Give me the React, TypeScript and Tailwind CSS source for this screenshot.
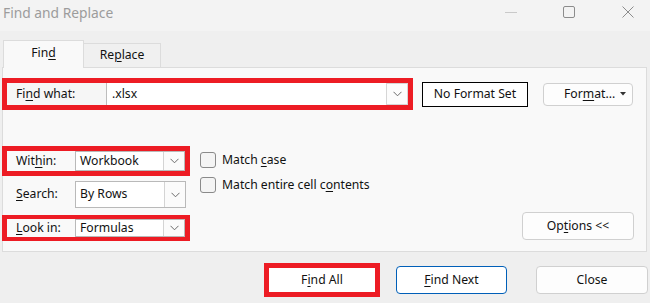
import React from "react";

const U = ({ children }: { children: React.ReactNode }) => (
  <span className="underline underline-offset-[2px] decoration-[1px]">{children}</span>
);

const Chevron = () => (
  <svg width="9" height="6" viewBox="0 0 9 6" className="block">
    <path d="M0.5 0.8 L4.5 4.8 L8.5 0.8" fill="none" stroke="#6b6b6b" strokeWidth="1" />
  </svg>
);

const Select = ({ value, className = "" }: { value: string; className?: string }) => (
  <div className={`flex bg-white border border-[#b9b9b9] ${className}`}>
    <div className="flex-1 flex items-center pl-[4px] leading-none">{value}</div>
    <div className="w-[21px] border-l border-[#d4d4d4] bg-[#fbfbfb] flex items-center justify-center">
      <Chevron />
    </div>
  </div>
);

const Checkbox = ({ children }: { children: React.ReactNode }) => (
  <div className="flex items-center gap-[6px] h-[16px]">
    <div className="w-[16px] h-[16px] rounded-[3px] border border-[#8a8a8a] bg-[#f4f4f4]" />
    <span className="leading-none">{children}</span>
  </div>
);

export default function App() {
  return (
    <div className="w-[650px] h-[303px] bg-[#efefef] overflow-hidden flex flex-col text-[12.2px] text-[#111] font-['Noto_Sans',sans-serif]">
      {/* Title bar */}
      <div className="h-[31px] shrink-0 bg-[#f3f3f3] flex items-start">
        <div className="pl-[3px] pt-[2px] text-[13.8px] text-[#9c9c9c] leading-[22px]">Find and Replace</div>
        <div className="ml-auto flex items-start pt-[6px] pr-[16px]">
          <svg width="12" height="12" viewBox="0 0 12 12" className="block">
            <path d="M0 6.5 H12" stroke="#c9c9c9" strokeWidth="1" />
          </svg>
          <svg width="12" height="12" viewBox="0 0 12 12" className="block ml-[46px]">
            <rect x="0.5" y="0.5" width="11" height="11" rx="1.5" fill="none" stroke="#8c8c8c" strokeWidth="1" />
          </svg>
          <svg width="12" height="12" viewBox="0 0 12 12" className="block ml-[47px]">
            <path d="M0.5 0.5 L11.5 11.5 M11.5 0.5 L0.5 11.5" stroke="#8c8c8c" strokeWidth="1" />
          </svg>
        </div>
      </div>

      {/* Tabs */}
      <div className="h-[36px] shrink-0 flex items-end pl-[3px]">
        <div className="relative z-10 w-[81px] h-[28px] -mb-px bg-[#f9f9f9] border border-b-0 border-[#dcdcdc] flex items-center justify-center pb-[2px]">
          Fin<U>d</U>
        </div>
        <div className="w-[77px] h-[24px] bg-[#f0f0f0] border border-b-0 border-l-0 border-[#dcdcdc] flex items-center justify-center pb-[1px]">
          Re<U>p</U>lace
        </div>
      </div>

      {/* Panel */}
      <div className="ml-[2px] w-[645px] h-[185px] shrink-0 bg-[#f9f9f9] border border-[#dcdcdc] flex flex-col">
        {/* Find what row */}
        <div className="mt-[10px] -ml-px flex items-center">
          <div className="w-[411px] h-[32px] border-[5px] border-[#ed1c24] flex">
            <div className="w-[99px] bg-[#f6f6f6] flex items-center pl-[9px]">
              Fi<U>n</U>d what:
            </div>
            <div className="flex-1 flex bg-white border-l border-[#bdbdbd]">
              <div className="flex-1 flex items-center pl-[5px]">.xlsx</div>
              <div className="w-[22px] border border-[#d6d6d6] bg-[#fcfcfc] flex items-center justify-center">
                <Chevron />
              </div>
            </div>
          </div>
          <div className="ml-[9px] w-[106px] h-[25px] border border-black bg-white flex items-center justify-center">
            No Format Set
          </div>
          <div className="ml-[15px] w-[90px] h-[23px] rounded-[4px] border border-[#d0d0d0] bg-[#fdfdfd] flex items-center">
            <span className="ml-[20px]">
              For<U>m</U>at...
            </span>
            <svg width="6" height="4" viewBox="0 0 6 4" className="block ml-auto mr-[6px]">
              <path d="M0 0 H6 L3 3.5 Z" fill="#333" />
            </svg>
          </div>
        </div>

        {/* Options area */}
        <div className="mt-[36px] -ml-px flex items-start">
          <div className="w-[188px] flex flex-col">
            <div className="h-[30px] border-[5px] border-[#ed1c24] flex">
              <div className="w-[68px] flex items-center pl-[9px]">
                Wit<U>h</U>in:
              </div>
              <Select value="Workbook" className="flex-1" />
            </div>
            <div className="mt-[5px] h-[27px] flex">
              <div className="w-[73px] flex items-center pl-[14px]">
                <U>S</U>earch:
              </div>
              <Select value="By Rows" className="w-[111px]" />
            </div>
            <div className="mt-[7px] h-[26px] border-x-[5px] border-y-[4px] border-[#ed1c24] flex">
              <div className="w-[68px] flex items-center pl-[9px]">
                <U>L</U>ook in:
              </div>
              <Select value="Formulas" className="flex-1" />
            </div>
          </div>

          <div className="ml-[10px] mt-[6px] flex flex-col gap-[9px]">
            <Checkbox>
              Match <U>c</U>ase
            </Checkbox>
            <Checkbox>
              Match entire cell c<U>o</U>ntents
            </Checkbox>
          </div>

          <div className="ml-auto mr-[12px] mt-[66px] w-[112px] h-[28px] rounded-[4px] border border-[#d0d0d0] bg-[#fdfdfd] flex items-center justify-center">
            Op<U>t</U>ions &lt;&lt;
          </div>
        </div>
      </div>

      {/* Bottom buttons */}
      <div className="mt-[11px] flex items-center">
        <div className="ml-[264px] w-[116px] h-[34px] border-[5px] border-[#ed1c24] bg-white flex items-center justify-center">
          F<U>i</U>nd All
        </div>
        <div className="ml-[16px] w-[111px] h-[28px] rounded-[4px] border border-[#005fb8] bg-white flex items-center justify-center">
          <U>F</U>ind Next
        </div>
        <div className="ml-[29px] w-[112px] h-[28px] rounded-[4px] border border-[#d0d0d0] bg-[#fdfdfd] flex items-center justify-center">
          Close
        </div>
      </div>
    </div>
  );
}
